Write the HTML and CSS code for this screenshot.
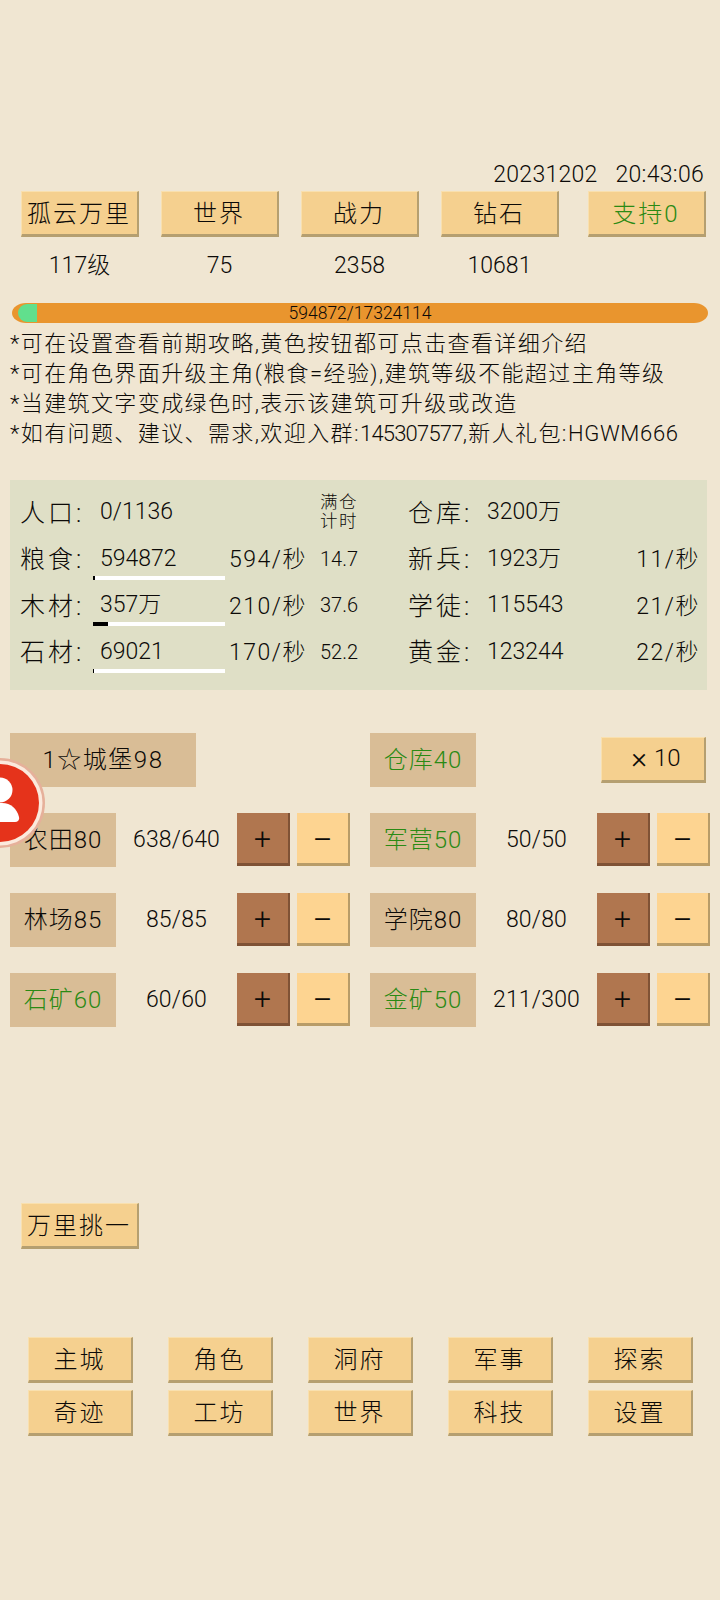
FILE: index.html
```html
<!DOCTYPE html>
<html lang="zh-CN">
<head>
    <meta charset="UTF-8">
    <meta name="viewport" content="width=device-width, initial-scale=1.0">
    <title>孤云万里</title>
    <link rel="stylesheet" href="styles.css">
</head>
<body>
    <div class="clock">20231202&nbsp;&nbsp;&nbsp;20:43:06</div>

    <div class="top-row">
        <div class="top-col"><div class="btn">孤云万里</div><div class="top-val">117级</div></div>
        <div class="top-col"><div class="btn">世界</div><div class="top-val">75</div></div>
        <div class="top-col"><div class="btn">战力</div><div class="top-val">2358</div></div>
        <div class="top-col"><div class="btn">钻石</div><div class="top-val">10681</div></div>
        <div class="top-col last"><div class="btn green">支持0</div></div>
    </div>

    <div class="exp">
        <div class="exp-fill"></div>
        <span class="exp-text">594872/17324114</span>
    </div>

    <div class="notes">
        <p>*可在设置查看前期攻略,黄色按钮都可点击查看详细介绍</p>
        <p>*可在角色界面升级主角(粮食=经验),建筑等级不能超过主角等级</p>
        <p>*当建筑文字变成绿色时,表示该建筑可升级或改造</p>
        <p>*如有问题、建议、需求,欢迎入群:<span class="qq">145307577</span>,新人礼包:<span class="code">HGWM666</span></p>
    </div>

    <div class="panel">
        <div class="res-row">
            <span class="res-name">人口:</span><span class="res-val">0/1136</span><span class="res-rate"></span>
            <span class="res-time small">满仓<br>计时</span>
            <span class="res-name">仓库:</span><span class="res-val">3200万</span><span class="res-rate"></span>
        </div>
        <div class="res-row">
            <span class="res-name">粮食:</span><span class="res-val">594872<i class="bar"><b style="width:2px"></b></i></span><span class="res-rate">594/秒</span>
            <span class="res-time">14.7</span>
            <span class="res-name">新兵:</span><span class="res-val">1923万</span><span class="res-rate right">11/秒</span>
        </div>
        <div class="res-row">
            <span class="res-name">木材:</span><span class="res-val">357万<i class="bar"><b style="width:15px"></b></i></span><span class="res-rate">210/秒</span>
            <span class="res-time">37.6</span>
            <span class="res-name">学徒:</span><span class="res-val">115543</span><span class="res-rate right">21/秒</span>
        </div>
        <div class="res-row">
            <span class="res-name">石材:</span><span class="res-val">69021<i class="bar"><b style="width:1px"></b></i></span><span class="res-rate">170/秒</span>
            <span class="res-time">52.2</span>
            <span class="res-name">黄金:</span><span class="res-val">123244</span><span class="res-rate right">22/秒</span>
        </div>
    </div>

    <div class="build">
        <div class="build-head">
            <div class="tag wide">1☆城堡98</div>
            <div class="tag green head-tag">仓库40</div>
            <div class="btn times"><span class="times-x">×</span>10</div>
        </div>
        <div class="build-grid">
            <div class="build-row"><div class="tag">农田80</div><div class="count">638/640</div><div class="step plus">+</div><div class="step minus">−</div></div>
            <div class="build-row"><div class="tag green">军营50</div><div class="count">50/50</div><div class="step plus">+</div><div class="step minus">−</div></div>
            <div class="build-row"><div class="tag">林场85</div><div class="count">85/85</div><div class="step plus">+</div><div class="step minus">−</div></div>
            <div class="build-row"><div class="tag">学院80</div><div class="count">80/80</div><div class="step plus">+</div><div class="step minus">−</div></div>
            <div class="build-row"><div class="tag green">石矿60</div><div class="count">60/60</div><div class="step plus">+</div><div class="step minus">−</div></div>
            <div class="build-row"><div class="tag green">金矿50</div><div class="count">211/300</div><div class="step plus">+</div><div class="step minus">−</div></div>
        </div>
    </div>

    <div class="btn challenge">万里挑一</div>

    <div class="nav">
        <div class="btn">主城</div>
        <div class="btn">角色</div>
        <div class="btn">洞府</div>
        <div class="btn">军事</div>
        <div class="btn">探索</div>
        <div class="btn">奇迹</div>
        <div class="btn">工坊</div>
        <div class="btn">世界</div>
        <div class="btn">科技</div>
        <div class="btn">设置</div>
    </div>

    <div class="avatar">
        <svg width="45" height="90" viewBox="0 0 45 90">
            <path d="M0 0a45 45 0 0 1 0 90z" fill="#e6b09a"/>
            <path d="M0 2.500a42.500 42.500 0 0 1 0 85z" fill="#fbe9dc"/>
            <path d="M0 6a39 39 0 0 1 0 78z" fill="#e5331b"/>
            <circle cx="0" cy="32" r="12.500" fill="#fff"/>
            <path d="M-14 64v-9c0-6 5-10 12-10h4c9 0 15 6 17 14 .6 3-1 5-4 5z" fill="#fff"/>
        </svg>
    </div>
</body>
</html>
```

FILE: styles.css
```css
body {
    margin: 0;
    width: 720px;
    height: 1600px;
    overflow: hidden;
    position: relative;
    background: #f0e6d2;
    color: #0c0a08;
    font-family: Roboto, "Noto Sans CJK SC", sans-serif;
    font-weight: 300;
    font-size: 22px;
}
.clock {
    padding-top: 160px;
    padding-right: 16px;
    height: 31px;
    line-height: 30px;
    text-align: right;
    font-size: 23px;
    letter-spacing: 0.300px;
}
.btn {
    box-sizing: border-box;
    display: flex;
    align-items: center;
    justify-content: center;
    padding-bottom: 3px;
    background: #f5d08f;
    border-right: 2px solid #b59f70;
    border-bottom: 3px solid #b59f70;
    border-top: 1px solid #f9e0ae;
    border-left: 1px solid #f9e0ae;
    letter-spacing: 2px;
}
.green {
    color: #2a8a14;
}
.top-row {
    display: flex;
    gap: 22px;
    margin-left: 20.500px;
}
.top-col {
    width: 118px;
    text-align: center;
}
.top-col .btn {
    height: 46px;
    font-size: 24px;
}
.top-col.last {
    margin-left: 7px;
}
.top-val {
    margin-top: 14px;
    height: 30px;
    line-height: 30px;
    font-size: 23px;
}
.exp {
    position: relative;
    margin: 22px 12px 0 12px;
    height: 20px;
    border-radius: 14px / 10px;
    background: #e9952e;
    overflow: hidden;
    text-align: center;
    font-size: 17.500px;
    line-height: 20px;
}
.exp-fill {
    position: absolute;
    left: 6px;
    top: 1px;
    bottom: 1px;
    width: 19px;
    background: #61df8d;
    border-radius: 10px 0 0 10px;
}
.exp-text {
    position: relative;
}
.notes {
    margin: 6px 0 0 10px;
    white-space: nowrap;
    letter-spacing: 1.400px;
}
.notes p {
    margin: 0;
    height: 30px;
    line-height: 30px;
}
.qq {
    letter-spacing: -0.800px;
}
.code {
    letter-spacing: 0.700px;
}
.panel {
    box-sizing: border-box;
    margin: 31px 13px 0 10px;
    height: 210px;
    padding: 9px 7px 0 10px;
    background: #dfdfc6;
    font-size: 23px;
}
.res-row {
    display: grid;
    grid-template-columns: 80px 129px 91px 88px 79px 1fr auto;
    align-items: center;
    height: 46.500px;
}
.res-name {
    letter-spacing: 3px;
    font-size: 25px;
    margin-bottom: 3px;
}
.res-val {
    position: relative;
    line-height: 30px;
}
.res-rate {
    white-space: nowrap;
    letter-spacing: 1.500px;
    margin-bottom: 3px;
}
.res-time {
    font-size: 20px;
}
.res-time.small {
    font-size: 17.500px;
    line-height: 19px;
    letter-spacing: 1.500px;
}
.res-val .bar {
    position: absolute;
    left: -7px;
    top: 32px;
    width: 132px;
    height: 4px;
    background: #fff;
    display: block;
}
.res-val .bar b {
    display: block;
    height: 4px;
    background: #000;
}
.build {
    margin: 43px 10px 0 10px;
}
.build-head {
    display: flex;
    align-items: center;
    height: 54px;
}
.tag {
    box-sizing: border-box;
    display: flex;
    align-items: center;
    justify-content: center;
    width: 106px;
    height: 54px;
    padding-bottom: 5px;
    background: #d9bd96;
    font-size: 24px;
    letter-spacing: 1px;
    flex: none;
}
.tag.wide {
    width: 186px;
    letter-spacing: 1.500px;
}
.head-tag {
    margin-left: 174px;
}
.times {
    width: 105px;
    height: 46px;
    margin-left: 125px;
    padding-left: 6px;
    font-size: 24px;
    letter-spacing: 0;
}
.times-x {
    font-size: 30px;
    line-height: 24px;
    margin-right: 7px;
}
.build-grid {
    display: grid;
    grid-template-columns: 340px 340px;
    column-gap: 20px;
    row-gap: 26px;
    margin-top: 26px;
}
.build-row {
    display: flex;
    align-items: flex-start;
}
.count {
    width: 121px;
    height: 54px;
    line-height: 54px;
    text-align: center;
    font-size: 23px;
    letter-spacing: 0.200px;
}
.step {
    box-sizing: border-box;
    display: flex;
    align-items: center;
    justify-content: center;
    width: 53px;
    height: 53px;
    font-size: 30px;
}
.plus {
    background: #b0764f;
    border-right: 2px solid #7f5235;
    border-bottom: 3px solid #7f5235;
}
.minus {
    margin-left: 7px;
    padding-top: 3px;
    font-size: 36px;
    background: #fdd491;
    border-right: 2px solid #b89c68;
    border-bottom: 3px solid #b89c68;
}
.challenge {
    width: 118px;
    height: 46px;
    margin: 176px 0 0 20.500px;
    font-size: 24px;
}
.nav {
    display: grid;
    grid-template-columns: repeat(5, 105px);
    column-gap: 35px;
    row-gap: 7px;
    margin: 88px 0 0 27.500px;
}
.nav .btn {
    height: 46px;
    font-size: 24px;
}
.avatar {
    position: absolute;
    left: 0;
    top: 758px;
    height: 90px;
}
.avatar svg {
    display: block;
    overflow: visible;
}
```
